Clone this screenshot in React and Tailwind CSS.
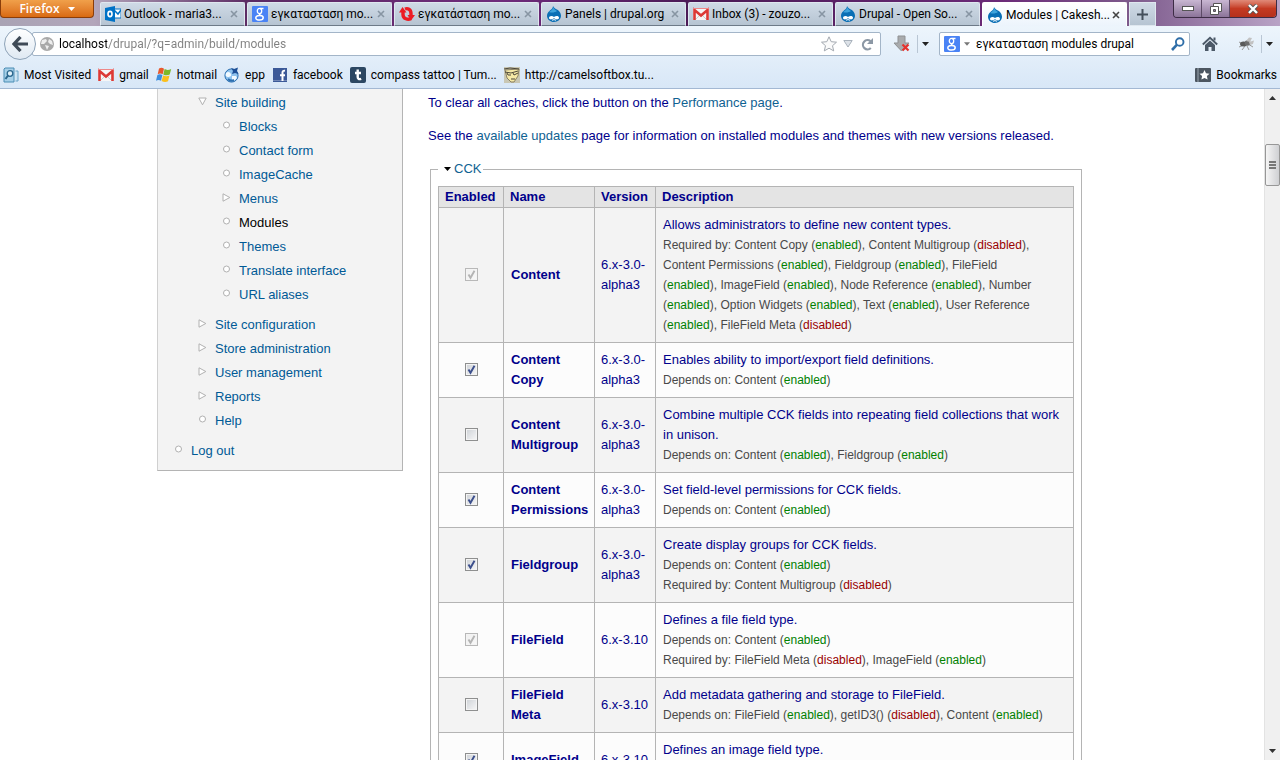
const TABS = [
  { icon: 'outlook', title: 'Outlook - maria3...' },
  { icon: 'google', title: 'εγκατασταση mo...' },
  { icon: 'swirl', title: 'εγκατάσταση mo...' },
  { icon: 'drupal', title: 'Panels | drupal.org' },
  { icon: 'gmail', title: 'Inbox (3) - zouzo...' },
  { icon: 'drupal', title: 'Drupal - Open So...' },
  { icon: 'drupal', title: 'Modules | Cakesh...', active: true },
];

const BOOKMARKS = [
  { icon: 'visited', title: 'Most Visited' },
  { icon: 'gmail', title: 'gmail' },
  { icon: 'hotmail', title: 'hotmail' },
  { icon: 'globe', title: 'epp' },
  { icon: 'facebook', title: 'facebook' },
  { icon: 'tumblr', title: 'compass tattoo | Tum...' },
  { icon: 'face', title: 'http://camelsoftbox.tu...' },
];

const SITE_BUILDING = [
  { title: 'Blocks' },
  { title: 'Contact form' },
  { title: 'ImageCache' },
  { title: 'Menus', type: 'collapsed' },
  { title: 'Modules', active: true },
  { title: 'Themes' },
  { title: 'Translate interface' },
  { title: 'URL aliases' },
];

const ADMIN = [
  { title: 'Site building', type: 'expanded', children: SITE_BUILDING },
  { title: 'Site configuration', type: 'collapsed' },
  { title: 'Store administration', type: 'collapsed' },
  { title: 'User management', type: 'collapsed' },
  { title: 'Reports', type: 'collapsed' },
  { title: 'Help' },
];

// "+" marks an enabled module, "-" a disabled one
const MODULES = [
  {
    name: 'Content', version: '6.x-3.0-alpha3', checked: true, locked: true,
    text: 'Allows administrators to define new content types.',
    required: ['+Content Copy', '-Content Multigroup', '+Content Permissions', '+Fieldgroup', '+FileField', '+ImageField', '+Node Reference', '+Number', '+Option Widgets', '+Text', '+User Reference', '-FileField Meta'],
  },
  {
    name: 'Content Copy', version: '6.x-3.0-alpha3', checked: true,
    text: 'Enables ability to import/export field definitions.',
    depends: ['+Content'],
  },
  {
    name: 'Content Multigroup', version: '6.x-3.0-alpha3',
    text: 'Combine multiple CCK fields into repeating field collections that work in unison.',
    depends: ['+Content', '+Fieldgroup'],
  },
  {
    name: 'Content Permissions', version: '6.x-3.0-alpha3', checked: true,
    text: 'Set field-level permissions for CCK fields.',
    depends: ['+Content'],
  },
  {
    name: 'Fieldgroup', version: '6.x-3.0-alpha3', checked: true,
    text: 'Create display groups for CCK fields.',
    depends: ['+Content'],
    required: ['-Content Multigroup'],
  },
  {
    name: 'FileField', version: '6.x-3.10', checked: true, locked: true,
    text: 'Defines a file field type.',
    depends: ['+Content'],
    required: ['-FileField Meta', '+ImageField'],
  },
  {
    name: 'FileField Meta', version: '6.x-3.10',
    text: 'Add metadata gathering and storage to FileField.',
    depends: ['+FileField', '-getID3()', '+Content'],
  },
  {
    name: 'ImageField', version: '6.x-3.10', checked: true,
    text: 'Defines an image field type.',
    depends: ['+Content', '+FileField'],
  },
];

function Icon({ name }) {
  const props = { width: 16, height: 16, viewBox: '0 0 16 16', className: 'shrink-0', 'aria-hidden': true };
  switch (name) {
    case 'outlook':
      return (
        <svg {...props}>
          <path d="M9 3h7v9H9z" fill="#fff" stroke="#0072c6" />
          <path d="M9 4l4 4 3-4" fill="none" stroke="#0072c6" strokeWidth="1.5" />
          <path d="M0 2l10-2v16L0 14z" fill="#0072c6" />
          <ellipse cx="5" cy="8" rx="2" ry="2.6" fill="none" stroke="#fff" strokeWidth="1.6" />
        </svg>
      );
    case 'google':
      return (
        <svg {...props}>
          <rect width="16" height="16" rx="1" fill="#4a83f5" />
          <ellipse cx="7.5" cy="5" rx="2.2" ry="2.7" fill="none" stroke="#fff" strokeWidth="1.3" />
          <path d="M8 2.4h3.5M8.5 7.5c-2 1-1 2 .4 2.4M7.5 9.6c-3 0-3.7 1.2-3.7 2.3 0 3 7.400 2.8 7.400-.2 0-1.300-1.300-1.900-2.700-2.100" fill="none" stroke="#fff" strokeWidth="1.5" />
        </svg>
      );
    case 'swirl':
      return (
        <svg {...props}>
          <path d="M4 6v2.500c0 4.500 5 5.500 8 4" fill="none" stroke="#ec1c24" strokeWidth="3.4" />
          <path d="M12 10V7.500C12 3 8.500 2 6 3" fill="none" stroke="#ec1c24" strokeWidth="3.400" />
          <path d="M0 6.500L3.500 1l4 5.500z" fill="#ec1c24" />
          <path d="M16 9l-4 5.500L8.500 9z" fill="#ec1c24" />
        </svg>
      );
    case 'drupal':
      return (
        <svg {...props}>
          <path d="M7 0c1 2 2.500 2.600 4 3.600 2 1.300 4 3.300 4 6.200 0 3.600-3.300 6.200-7 6.200s-7-2.500-7-6.300c0-2.500 1.600-4.300 3.500-5.700C6 3 7 2 7 0z" fill="#0a6fb5" />
          <path d="M7 1c1 2 2.500 3 4 4-2 1.500-5 2-8 1 2-1.500 4-2.500 4-5z" fill="#3fa4dc" />
          <path d="M3 12c0-2.300 3-2.800 5-1.100 2-1.600 5-1.300 5 .9 0 2-3 2.200-5 .5-2 1.600-5 1.500-5-.3z" fill="#fff" />
          <path d="M6 14.300c1.300-.8 2.700-.8 4 0" stroke="#fff" fill="none" />
        </svg>
      );
    case 'gmail':
      return (
        <svg {...props}>
          <path d="M0 3h16v11H0z" fill="#f6f6f6" />
          <path d="M3 13l4-4M13 13L9 9" stroke="#ccc" />
          <path d="M1.500 14V4L8 9.500 14.500 4v10" fill="none" stroke="#dc3a36" strokeWidth="2.600" />
          <path d="M0 2.500h16" stroke="#e88" />
        </svg>
      );
    case 'visited':
      return (
        <svg {...props}>
          <path d="M2 1h9v14H1V2z" fill="#a6cfe8" stroke="#4b8db4" />
          <path d="M12.500 4H15v10h-2.500" fill="#c9e2f1" stroke="#6ba3c5" />
          <circle cx="7" cy="6.500" r="2.800" fill="#dff0fa" stroke="#2b668d" strokeWidth="1.300" />
          <path d="M5 8.500L2.500 12" stroke="#2b668d" strokeWidth="2" />
        </svg>
      );
    case 'hotmail':
      return (
        <svg {...props}>
          <path d="M3 1.500c2-1.200 3.500-.8 5 .2L6.700 7.200c-1.700-1-3.200-1-5 0z" fill="#e8582c" />
          <path d="M8.600 2.100c2 1.200 4.200 1 6.600-.1L13.700 7.600c-2 1-4.200 1-6.400-.1z" fill="#7db928" />
          <path d="M1.400 8c1.800-1 3.400-.9 5 0L5 13.700c-1.700-1-3.300-1-5 0z" fill="#3c8ede" />
          <path d="M7.100 8.400c2 1.100 4.200 1.100 6.400 0L12 14.200c-2 1.200-4.300 1-6.400-.2z" fill="#fbbf1c" />
        </svg>
      );
    case 'globe':
      return (
        <svg {...props}>
          <circle cx="7.500" cy="8.500" r="6.600" fill="#8fc3ee" stroke="#2c6fb0" />
          <path d="M2 6c2-2 4-1 5 1s-1 3-3 3-3-2-2-4zM8 9l4 0 1 2-3 3-2-1z" fill="#f2faff" />
          <path d="M4 12c2 2 4 2 6 1" fill="none" stroke="#2c6fb0" strokeWidth="2" />
          <path d="M7 1l3 1 4-1.500-1 3.500 1.500 3L11 6 8 7l1-3z" fill="#1d4f96" />
        </svg>
      );
    case 'facebook':
      return (
        <svg {...props}>
          <rect x="1" y="1" width="14" height="14" fill="#3b5998" />
          <path d="M1 13.500h14" stroke="#7186b5" />
          <path d="M10.500 14V5.500c0-1.500.8-2 2.500-1.700M8 8.300h5" fill="none" stroke="#fff" strokeWidth="2" />
        </svg>
      );
    case 'tumblr':
      return (
        <svg {...props}>
          <rect width="16" height="16" rx="2" fill="#2c4762" />
          <path d="M7.700 2.500V10c0 2 1.300 2.500 3.500 1.800M5 6h6" fill="none" stroke="#fff" strokeWidth="2.400" />
        </svg>
      );
    case 'face':
      return (
        <svg {...props}>
          <path d="M0 0h16v16H0z" fill="#c9c7b4" />
          <path d="M1 3l14-1-1 7-4 6H7L3 11z" fill="#f6e9a6" stroke="#8a8062" />
          <path d="M0 2l6-1 9 1M1 5l6 1 7-2M3 6l1 2 3 0M9 6l1 2 4-2M7 12h4" fill="none" stroke="#4a4436" />
        </svg>
      );
    case 'bookmarks':
      return (
        <svg {...props}>
          <rect y="1" width="16" height="14" rx="1" fill="#4c5661" />
          <path d="M3 1v14" stroke="#9aa5b0" />
          <path d="M9.500 3l1.500 3.300 3.500.4-2.600 2.400.7 3.500-3.100-1.700-3.100 1.700.7-3.500L4.500 6.700 8 6.300z" fill="#fff" />
        </svg>
      );
    case 'world':
      return (
        <svg {...props}>
          <circle cx="8" cy="8" r="7" fill="#a9a9a9" />
          <path d="M3 4l4-1 1 2-3 3-3 0zM10 3l3 2 1 4-3-1-2-2zM6 9l4 1-2 4z" fill="#eee" />
        </svg>
      );
    default:
      return null;
  }
}

function Caret({ className }) {
  return (
    <svg width="7" height="4" viewBox="0 0 7 4" className={className} aria-hidden="true">
      <path d="M0 0h7L3.500 4z" fill="currentColor" />
    </svg>
  );
}

function TabStrip() {
  return (
    <div className="flex h-[26px] items-start overflow-hidden bg-[linear-gradient(to_right,#a9a3b4_0px,#b3a6bb_94px,#5b2a63_250px,#6f2b7c_500px,#4a1a55_700px,#6b2a78_1000px,#7d5a8c_1130px,#b9a3c6_1280px)]">
      <button className="flex h-[18px] w-[94px] shrink-0 items-center justify-center gap-2 rounded-b border border-t-0 border-[#8a3d0a] bg-linear-to-b from-[#f0a04a] to-[#d96a10] font-['Open_Sans','Noto_Sans',sans-serif] font-semibold text-white">
        Firefox
        <Caret />
      </button>
      <div className="ml-1.5 flex min-w-0 gap-0.5 pt-0.5">
        {TABS.map((tab, i) => (
          <div
            key={i}
            className={`flex h-6 w-[145px] items-center rounded-t-xs border-x border-t pr-1.5 pl-1 ${
              tab.active
                ? 'border-white bg-linear-to-b from-white to-[#ecf4fc]'
                : 'border-[#dfe7ef] border-b border-b-[#6d7a88] bg-linear-to-b from-[#cfdae6] to-[#b6c4d2]'
            }`}
          >
            <button className="flex min-w-0 flex-1 items-center gap-[3px] text-left">
              <Icon name={tab.icon} />
              <span className="whitespace-nowrap">{tab.title}</span>
            </button>
            <button aria-label="Close tab" className={tab.active ? 'text-[#444]' : 'text-[#8795a3]'}>
              <svg width="8" height="8" viewBox="0 0 8 8">
                <path d="M1 1l6 6M7 1L1 7" stroke="currentColor" strokeWidth="1.600" />
              </svg>
            </button>
          </div>
        ))}
        <button aria-label="New tab" className="flex h-6 w-[27px] items-center justify-center border border-[#dfe7ef] bg-linear-to-b from-[#cfdae6] to-[#b6c4d2]">
          <svg width="11" height="11" viewBox="0 0 11 11">
            <path d="M5.500 0v11M0 5.500h11" stroke="#44505c" strokeWidth="2" />
          </svg>
        </button>
      </div>
      <div className="mr-[3px] ml-auto flex h-[18px] shrink-0 overflow-hidden rounded-b border border-t-0 border-[#3d2c45]">
        <button aria-label="Minimize" className="flex w-7 items-center justify-center border-r border-[#5d4a66] bg-linear-to-b from-[#c9b7d2] to-[#8c7499]">
          <svg width="12" height="5" viewBox="0 0 12 5">
            <rect x=".5" y=".5" width="11" height="4" fill="#fff" stroke="#555" />
          </svg>
        </button>
        <button aria-label="Restore" className="flex w-7 items-center justify-center border-r border-[#5d4a66] bg-linear-to-b from-[#c9b7d2] to-[#8c7499]">
          <svg width="12" height="12" viewBox="0 0 12 12">
            <path d="M3.500.5h8v8h-8z" fill="#fff" stroke="#555" />
            <path d="M.5 3.500h8v8h-8z" fill="#fff" stroke="#555" />
            <path d="M3.500 6.500h2v2h-2z" fill="#8c7499" stroke="#555" />
          </svg>
        </button>
        <button aria-label="Close" className="flex w-[46px] items-center justify-center bg-linear-to-b from-[#e08a78] via-[#c43a22] to-[#b5301c]">
          <svg width="12" height="10" viewBox="0 0 12 10">
            <path d="M2 1l8 8M10 1L2 9" stroke="#555" strokeWidth="4" />
            <path d="M2 1l8 8M10 1L2 9" stroke="#fff" strokeWidth="2.400" />
          </svg>
        </button>
      </div>
    </div>
  );
}

function NavBar() {
  return (
    <div className="flex h-9 items-center pr-[7px] pl-1">
      <button aria-label="Back" className="z-10 flex size-8 shrink-0 items-center justify-center rounded-full border border-[#8ea3b8] bg-linear-to-b from-white to-[#dfe9f3]">
        <svg width="16" height="16" viewBox="0 0 16 16">
          <path d="M8.500 1L2 8l6.500 7M2 8h14" fill="none" stroke="#3f4a57" strokeWidth="3.200" />
        </svg>
      </button>
      <div className="-ml-1 flex h-6 min-w-0 flex-1 items-center rounded-xs border border-[#a3b5c8] bg-white px-1.5">
        <Icon name="world" />
        <input
          aria-label="Address"
          defaultValue="localhost/drupal/?q=admin/build/modules"
          className="ml-1 min-w-0 flex-1 bg-[linear-gradient(to_right,#000_48px,#808080_48px)] bg-clip-text text-transparent outline-none"
        />
        <button aria-label="Bookmark this page">
          <svg width="16" height="16" viewBox="0 0 16 16">
            <path d="M8 .8l2.200 4.900 5.300.5-4 3.500 1.200 5.200L8 12.200l-4.700 2.700 1.200-5.200-4-3.500 5.300-.5z" fill="#fafafa" stroke="#a3a9b0" />
          </svg>
        </button>
        <button aria-label="Show history" className="ml-1.5">
          <svg width="10" height="8" viewBox="0 0 10 8">
            <path d="M.8.500h8.400L5 7z" fill="#dde2e8" stroke="#a9b2bc" />
          </svg>
        </button>
        <button aria-label="Reload" className="ml-2">
          <svg width="13" height="13" viewBox="0 0 13 13">
            <path d="M9.800 10A4.600 4.600 0 1 1 9.500 3.200" fill="none" stroke="#8c98a5" strokeWidth="2.200" />
            <path d="M12 0v6H6z" fill="#8c98a5" />
          </svg>
        </button>
      </div>
      <button aria-label="Downloads" className="ml-3">
        <svg width="18" height="18" viewBox="0 0 18 18">
          <path d="M5 1h7v7h4l-7.500 8L1 8h4z" fill="#a9abad" stroke="#8f9193" />
          <path d="M9.500 9.500l6 6M15.500 9.500l-6 6" stroke="#e5322d" strokeWidth="2.200" />
        </svg>
      </button>
      <span className="ml-1.5 h-[18px] w-px bg-[#b9c6d4]" />
      <button aria-label="Downloads menu" className="ml-1 text-[#222]">
        <Caret />
      </button>
      <div className="ml-2.5 flex h-6 w-[251px] items-center rounded-xs border border-[#a3b5c8] bg-white px-1">
        <button aria-label="Search engine" className="flex items-center gap-1 text-[#777]">
          <Icon name="google" />
          <Caret className="w-[6px]" />
        </button>
        <input aria-label="Search" defaultValue="εγκατασταση modules drupal" className="ml-1.5 min-w-0 flex-1 outline-none" />
        <button aria-label="Go">
          <svg width="14" height="14" viewBox="0 0 14 14">
            <circle cx="8.700" cy="5" r="3.800" fill="none" stroke="#2f6ea8" strokeWidth="1.900" />
            <path d="M6 7.700L1 13" stroke="#2f6ea8" strokeWidth="2.600" />
          </svg>
        </button>
      </div>
      <button aria-label="Home" className="ml-3">
        <svg width="16" height="16" viewBox="0 0 16 16">
          <path d="M8 4.500l5 4.500v6H9.500v-4h-3v4H3V9z" fill="#4c5968" />
          <path d="M.8 8.500L8 1.800l7.200 6.700" fill="none" stroke="#4c5968" strokeWidth="1.900" />
          <path d="M11.500 1.500h2v3h-2z" fill="#4c5968" />
        </svg>
      </button>
      <button aria-label="Add-on" className="ml-5">
        <svg width="17" height="14" viewBox="0 0 17 14">
          <path d="M1 5l4 2M1 10l5-2M4 13l3-4M11 13L9 9M15 10l-5-3" stroke="#9a9a9a" fill="none" />
          <ellipse cx="5.500" cy="7" rx="3.500" ry="2.500" fill="#5a5a5a" />
          <ellipse cx="9.500" cy="6" rx="2.800" ry="2.800" fill="#6d6d6d" />
          <path d="M8 4l3-3.500 3 .5-2 4zM11 5l5-1.500-1 3.500-3 1z" fill="#c2c2c2" />
        </svg>
      </button>
      <span className="ml-1.5 h-[18px] w-px bg-[#b9c6d4]" />
      <button aria-label="Add-on menu" className="ml-1 text-[#222]">
        <Caret />
      </button>
    </div>
  );
}

function BookmarksBar() {
  return (
    <div className="flex h-[26px] items-center gap-[7px] overflow-hidden pl-[3px] whitespace-nowrap">
      {BOOKMARKS.map(b => (
        <a key={b.title} href="#" className="flex items-center gap-[5px]">
          <Icon name={b.icon} />
          {b.title}
        </a>
      ))}
      <button className="mr-[3px] ml-auto flex items-center gap-[5px]">
        <Icon name="bookmarks" />
        Bookmarks
      </button>
    </div>
  );
}

function Bullet({ type }) {
  return (
    <svg width="9" height="9" viewBox="0 0 9 9" className="mt-1.5 shrink-0" aria-hidden="true">
      {type === 'expanded' && <path d="M.8 1h7.400L4.500 7.800z" fill="#fff" stroke="#b0b0b0" />}
      {type === 'collapsed' && <path d="M1 .8L7.800 4.500 1 8.200z" fill="#fff" stroke="#b0b0b0" />}
      {!type && <circle cx="4.500" cy="4" r="3" fill="#fff" stroke="#b0b0b0" />}
    </svg>
  );
}

function MenuItem({ item }) {
  return (
    <li>
      <div className="flex h-6 gap-2">
        <Bullet type={item.type} />
        <a href="#" className={`leading-6 ${item.active ? 'text-black' : 'text-[#005a96]'}`}>{item.title}</a>
      </div>
      {item.children && <Menu items={item.children} />}
    </li>
  );
}

function Menu({ items }) {
  return (
    <ul className="mb-1.5 list-none pl-6">
      {items.map(item => <MenuItem key={item.title} item={item} />)}
    </ul>
  );
}

function ModuleCheckbox({ module }) {
  return (
    <span className="inline-grid align-middle">
      <input
        type="checkbox"
        aria-label={`Enable ${module.name}`}
        defaultChecked={module.checked}
        disabled={module.locked}
        className="peer col-start-1 row-start-1 size-[13px] appearance-none border border-[#8e8f8f] bg-linear-to-br from-[#cdd1d6] to-[#f8f8f8] shadow-[inset_0_0_0_1px_#f4f4f4] disabled:border-[#b8b8b8] disabled:from-[#f0f0f0]"
      />
      <svg
        viewBox="0 0 13 13"
        className="pointer-events-none invisible col-start-1 row-start-1 size-[13px] text-[#3c4f8c] peer-checked:visible peer-disabled:text-[#b4b4b4]"
      >
        <path d="M3.500 6.500l2 3.300L9.500 2.800" fill="none" stroke="currentColor" strokeWidth="1.900" />
      </svg>
    </span>
  );
}

function Relations({ label, items }) {
  return (
    <div className="pr-3.5 text-xs leading-5 text-[#494949]">
      {label}:{' '}
      {items.map((item, i) => (
        <span key={item}>
          {i > 0 && ', '}
          {item.slice(1)} (
          {item[0] === '+' ? <span className="text-[#008000]">enabled</span> : <span className="text-[#990000]">disabled</span>}
          )
        </span>
      ))}
    </div>
  );
}

function ModuleTable() {
  return (
    <table className="w-full table-fixed border-collapse">
      <colgroup>
        <col className="w-[65px]" />
        <col className="w-[91px]" />
        <col className="w-[61px]" />
        <col />
      </colgroup>
      <thead>
        <tr className="bg-[#e4e4e4] text-left">
          {['Enabled', 'Name', 'Version', 'Description'].map(h => (
            <th key={h} className="border border-[#b4b4b4] px-1.5 font-bold">{h}</th>
          ))}
        </tr>
      </thead>
      <tbody>
        {MODULES.map(m => (
          <tr key={m.name} className="odd:bg-[#f3f3f3] even:bg-[#fcfcfc]">
            <td className="border border-[#b4b4b4] pb-[3px] text-center">
              <ModuleCheckbox module={m} />
            </td>
            <td className="border border-[#b4b4b4] py-[7px] pr-1 pl-[7px] font-bold">{m.name}</td>
            <td className="border border-[#b4b4b4] py-[7px] pl-1.5">{m.version}</td>
            <td className="border border-[#b4b4b4] px-[7px] py-[7px]">
              <div>{m.text}</div>
              {m.depends && <Relations label="Depends on" items={m.depends} />}
              {m.required && <Relations label="Required by" items={m.required} />}
            </td>
          </tr>
        ))}
      </tbody>
    </table>
  );
}

function Scrollbar() {
  return (
    <div className="flex w-4 shrink-0 flex-col items-center border-l border-[#e3e3e3] bg-[#f0f0f0] py-[7px] text-[#333]">
      <Caret className="rotate-180" />
      <div className="mt-11 flex h-[42px] w-[15px] flex-col items-center justify-center gap-px rounded-xs border border-[#979797] bg-linear-to-r from-[#f5f5f5] to-[#cfd0d3]">
        <span className="h-0.5 w-[7px] bg-[#777]" />
        <span className="h-0.5 w-[7px] bg-[#777]" />
        <span className="h-0.5 w-[7px] bg-[#777]" />
      </div>
      <Caret className="mt-auto" />
    </div>
  );
}

export default function App() {
  return (
    <div className="flex h-screen flex-col overflow-hidden bg-white">
      <header className="font-[Roboto,'Noto_Sans',sans-serif] text-xs text-black">
        <TabStrip />
        <div className="border-b border-[#a3b8d3] bg-linear-to-b from-[#edf5fc] to-[#d8e7f7]">
          <NavBar />
          <BookmarksBar />
        </div>
      </header>
      <div className="flex min-h-0 flex-1 font-['Liberation_Sans',Arial,sans-serif] text-[13px] leading-5 text-[#00008b]">
        <div className="min-w-0 flex-1 overflow-hidden">
          <div className="mx-auto flex max-w-[950px] items-start">
            <aside className="w-[246px] shrink-0 border border-t-0 border-[#b4b4b4] border-l-[#d0d0d0] bg-[#f3f3f3] pt-0.5 pb-[7px] pl-4">
              <Menu items={ADMIN} />
              <ul>
                <MenuItem item={{ title: 'Log out' }} />
              </ul>
            </aside>
            <main className="min-w-0 flex-1 px-[25px] pt-1">
              <p className="mb-[13px]">
                To clear all caches, click the button on the <a href="#" className="text-[#0f6292]">Performance page</a>.
              </p>
              <p className="mb-[13px]">
                See the <a href="#" className="text-[#0f6292]">available updates</a> page for information on installed modules and themes with new versions released.
              </p>
              <fieldset className="ml-0.5 border border-[#b4b4b4] px-[7px] pt-[7px] pb-2">
                <legend className="pr-0.5 pl-1.5">
                  <a href="#" className="flex items-center gap-[3px] text-[#0f6292]">
                    <Caret className="text-black" />
                    CCK
                  </a>
                </legend>
                <ModuleTable />
              </fieldset>
            </main>
          </div>
        </div>
        <Scrollbar />
      </div>
    </div>
  );
}
